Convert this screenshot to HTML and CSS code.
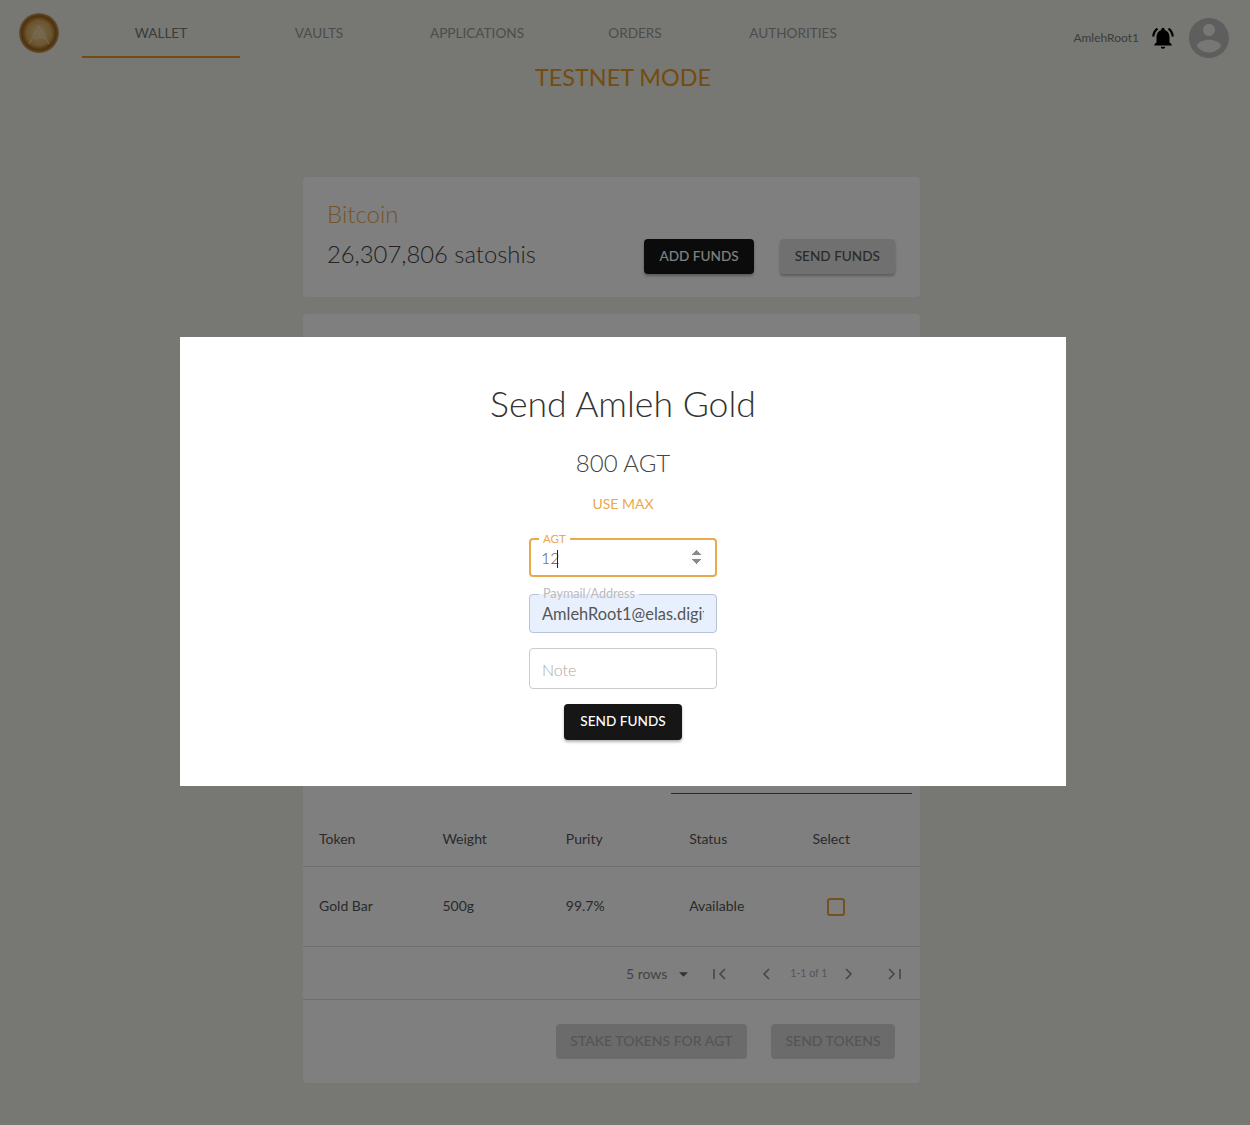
FILE: index.html
```html
<!DOCTYPE html>
<html lang="en">
<head>
    <meta charset="UTF-8">
    <meta name="viewport" content="width=device-width, initial-scale=1.0">
    <title>Send Amleh Gold</title>
    <link rel="stylesheet" href="styles.css">
</head>
<body>
    <header class="topbar">
        <svg class="logo" viewBox="0 0 40 40">
            <defs>
                <radialGradient id="coin" cx="50%" cy="50%" r="52%">
                    <stop offset="0" stop-color="#f0d7a4"/>
                    <stop offset="0.6" stop-color="#d9a95c"/>
                    <stop offset="0.82" stop-color="#9a6218"/>
                    <stop offset="1" stop-color="#d8b985"/>
                </radialGradient>
            </defs>
            <circle cx="20" cy="20" r="20" fill="url(#coin)"/>
            <path d="M10 31 20 13 30 31M15 26c4-3 8-3 11 0" fill="none" stroke="#f6e7c8" stroke-width="1.5" opacity="0.5"/>
        </svg>
        <nav class="tabs">
            <a class="tab active">WALLET</a>
            <a class="tab">VAULTS</a>
            <a class="tab">APPLICATIONS</a>
            <a class="tab">ORDERS</a>
            <a class="tab">AUTHORITIES</a>
        </nav>
        <div class="user">
            <span class="username">AmlehRoot1</span>
            <svg class="bell" viewBox="0 0 24 24"><path d="M7.58 4.08L6.15 2.65C3.75 4.48 2.17 7.3 2.03 10.5h2c.15-2.65 1.51-4.97 3.55-6.42zm12.39 6.42h2c-.15-3.2-1.73-6.02-4.12-7.85l-1.42 1.43c2.02 1.45 3.39 3.77 3.54 6.42zM18 11c0-3.07-1.64-5.64-4.5-6.32V4c0-.83-.67-1.5-1.5-1.5s-1.5.67-1.5 1.5v.68C7.63 5.36 6 7.92 6 11v5l-2 2v1h16v-1l-2-2v-5zm-6 11c.14 0 .27-.01.4-.04.65-.14 1.18-.58 1.44-1.18.1-.24.15-.5.15-.78h-4c.01 1.1.9 2 2.01 2z"/></svg>
            <svg class="avatar" viewBox="0 0 24 24"><path d="M12 2C6.48 2 2 6.48 2 12s4.48 10 10 10 10-4.48 10-10S17.52 2 12 2zm0 3c1.66 0 3 1.34 3 3s-1.34 3-3 3-3-1.34-3-3 1.34-3 3-3zm0 14.2c-2.5 0-4.71-1.28-6-3.22.03-1.99 4-3.08 6-3.08 1.99 0 5.97 1.09 6 3.08-1.29 1.94-3.5 3.22-6 3.22z"/></svg>
        </div>
    </header>

    <h2 class="testnet">TESTNET MODE</h2>

    <main class="wallet">
        <section class="card balance">
            <h3 class="card-title">Bitcoin</h3>
            <div class="balance-row">
                <span class="amount">26,307,806 satoshis</span>
                <div class="actions">
                    <button class="btn btn-dark">ADD FUNDS</button>
                    <button class="btn btn-grey">SEND FUNDS</button>
                </div>
            </div>
        </section>

        <section class="card tokens">
            <div class="search-line"></div>
            <div class="row head">
                <span>Token</span><span>Weight</span><span>Purity</span><span>Status</span><span>Select</span>
            </div>
            <div class="row body">
                <span>Gold Bar</span><span>500g</span><span>99.7%</span><span>Available</span>
                <span><i class="checkbox"></i></span>
            </div>
            <div class="pager">
                <span class="rows">5 rows</span>
                <svg class="caret" viewBox="0 0 10 5"><path d="M0 0h10L5 5z"/></svg>
                <svg class="pg pg-first" viewBox="0 0 16 16"><path d="M2 3v10M13 3 8 8l5 5"/></svg>
                <svg class="pg pg-prev" viewBox="0 0 16 16"><path d="M11 3 6 8l5 5"/></svg>
                <span class="range">1-1 of 1</span>
                <svg class="pg pg-next" viewBox="0 0 16 16"><path d="m5 3 5 5-5 5"/></svg>
                <svg class="pg pg-last" viewBox="0 0 16 16"><path d="m3 3 5 5-5 5M14 3v10"/></svg>
            </div>
            <div class="token-actions">
                <button class="btn btn-off">STAKE TOKENS FOR AGT</button>
                <button class="btn btn-off">SEND TOKENS</button>
            </div>
        </section>
    </main>

    <div class="overlay">
        <div class="modal">
            <h2 class="modal-title">Send Amleh Gold</h2>
            <p class="modal-balance">800 AGT</p>
            <a class="use-max">USE MAX</a>
            <fieldset class="field field-active">
                <legend>AGT</legend>
                <input type="number" value="12" autofocus>
                <i class="text-cursor"></i>
            </fieldset>
            <fieldset class="field field-filled">
                <legend>Paymail/Address</legend>
                <input type="text" value="AmlehRoot1@elas.digital">
            </fieldset>
            <div class="field field-plain">
                <input type="text" placeholder="Note">
            </div>
            <button class="btn btn-dark btn-send">SEND FUNDS</button>
        </div>
    </div>
</body>
</html>
```

FILE: styles.css
```css
* {
    box-sizing: border-box;
}
html, body {
    height: 100%;
}
body {
    margin: 0;
    height: 1125px;
    overflow: hidden;
    background: #eef0e6;
    font-family: Lato, "Open Sans", sans-serif;
    color: #333;
}
.topbar {
    display: flex;
    align-items: center;
    height: 58px;
    padding: 0 21px 0 19px;
}
.logo {
    width: 40px;
    height: 40px;
    margin-top: 8px;
}
.tabs {
    display: flex;
    margin-left: 23px;
}
.tab {
    width: 158px;
    height: 58px;
    padding-top: 25px;
    text-align: center;
    font-size: 13.6px;
    color: #999;
    border-bottom: 2px solid transparent;
}
.tab.active {
    color: #777;
    border-bottom-color: #e8991f;
}
.user {
    display: flex;
    align-items: center;
    margin-left: auto;
    margin-top: 20px;
}
.username {
    font-size: 12px;
    color: #777;
    margin-top: -3px;
}
.bell {
    width: 26px;
    height: 26px;
    margin-left: 11px;
    margin-top: -2px;
}
.avatar {
    width: 48px;
    height: 48px;
    margin-left: 9px;
    margin-right: -4px;
    margin-top: -2px;
    fill: #bdbdbd;
}
.testnet {
    margin: 5px 4px 0 0;
    text-align: center;
    font-size: 23.4px;
    font-weight: 400;
    line-height: 28px;
    color: #e8991f;
}
.wallet {
    width: 617px;
    margin: 86px 0 0 303px;
}
.card {
    background: #fff;
    border-radius: 4px;
    margin-bottom: 17px;
}
.balance {
    height: 120px;
    padding: 22px 25px 0 24px;
}
.card-title {
    margin: 0;
    font-size: 24px;
    font-weight: 300;
    line-height: 30px;
    color: #eaa94a;
}
.balance-row {
    display: flex;
    align-items: center;
    justify-content: space-between;
    margin-top: 10px;
}
.amount {
    margin-top: -5px;
    font-size: 23.8px;
    font-weight: 300;
    color: #444;
}
.actions {
    display: flex;
    gap: 26px;
}
.btn {
    height: 35px;
    padding: 0 15px 2px;
    border: 0;
    border-radius: 4px;
    font-family: inherit;
    font-size: 13.6px;
    font-weight: 500;
    box-shadow: 0 2px 3px rgba(0, 0, 0, 0.3);
}
.btn-dark {
    background: #161616;
    color: #fff;
}
.btn-grey {
    background: #e0e0e0;
    color: #555;
}
.btn-off {
    padding: 0 14.5px 2px;
    background: #d6d6d6;
    color: #aaa;
    font-size: 14px;
    box-shadow: none;
}
.tokens {
    height: 769px;
    padding-top: 479px;
}
.search-line {
    width: 241px;
    height: 1px;
    margin-left: 368px;
    background: #555;
}
.row {
    display: grid;
    grid-template-columns: repeat(5, 123.4px);
    align-items: center;
    padding-left: 16px;
    font-size: 14px;
    color: #555;
    border-bottom: 1px solid #ddd;
}
.row.head {
    height: 73px;
    padding-top: 16px;
}
.row.body {
    height: 80px;
    padding-bottom: 3px;
}
.checkbox {
    display: block;
    width: 18px;
    height: 18px;
    margin: 4px 0 0 14px;
    border: 2px solid #e8a33d;
    border-radius: 3px;
}
.pager {
    display: flex;
    align-items: center;
    height: 53px;
    padding-left: 323px;
    border-bottom: 1px solid #ddd;
    color: #888;
}
.rows {
    font-size: 14px;
}
.caret {
    width: 9px;
    height: 5px;
    margin: 2px 0 0 12px;
    fill: #666;
}
.pg {
    width: 16px;
    height: 16px;
    margin-top: 2px;
    fill: none;
    stroke: #888;
    stroke-width: 1.5;
}
.pg-first {
    margin-left: 24px;
}
.pg-prev {
    margin-left: 30px;
}
.range {
    width: 36px;
    margin-left: 16px;
    font-size: 10.5px;
    color: #aaa;
    white-space: nowrap;
}
.pg-next {
    margin-left: 15px;
}
.pg-last {
    margin-left: 29px;
}
.token-actions {
    display: flex;
    justify-content: flex-end;
    gap: 24px;
    padding: 24px 25px 0;
}
.overlay {
    position: fixed;
    top: 0;
    left: 0;
    width: 1250px;
    height: 1125px;
    padding: 0 4px 2px 0;
    display: flex;
    align-items: center;
    justify-content: center;
    background: rgba(0, 0, 0, 0.5);
}
.modal {
    display: flex;
    flex-direction: column;
    align-items: center;
    width: 886px;
    height: 449px;
    background: #fff;
}
.modal-title {
    margin: 46px 0 0;
    font-size: 35.6px;
    font-weight: 300;
    line-height: 42px;
    color: #333;
}
.modal-balance {
    margin: 23px 0 0;
    font-size: 24px;
    font-weight: 300;
    line-height: 30px;
    color: #444;
}
.use-max {
    margin-top: 17px;
    font-size: 14px;
    line-height: 18px;
    color: #eaa94a;
}
.field {
    position: relative;
    width: 188px;
    margin: 0;
    padding: 0 12px;
    border: 1px solid #ccc;
    border-radius: 4px;
}
.field legend {
    padding: 0 4px;
    margin-left: -3px;
    font-size: 11.5px;
    line-height: 12px;
    color: #bbb;
}
.field input {
    display: block;
    width: 100%;
    height: 32px;
    padding: 0;
    border: 0;
    outline: 0;
    background: transparent;
    font-family: inherit;
    font-size: 16px;
    font-weight: 300;
    color: #555;
}
.field-active {
    margin-top: 20px;
    height: 44px;
    border: 2px solid #eaa94a;
    padding: 0 11px 0 10px;
}
.field-active legend {
    margin-left: -2px;
    color: #eaa94a;
}
.field-active input {
    margin-top: -4px;
}
.text-cursor {
    position: absolute;
    left: 26px;
    top: 5px;
    width: 1px;
    height: 18px;
    background: #222;
}
.field-filled {
    margin-top: 11px;
    height: 45px;
    background: #e8f0fe;
    border-color: #b8c4d6;
}
.field-filled legend {
    font-size: 12.6px;
}
.field-filled input {
    margin-top: -3px;
    font-size: 16.4px;
    font-weight: 400;
}
.field-plain {
    margin-top: 15px;
    height: 41px;
    padding-top: 4px;
}
.field-plain input::placeholder {
    color: #aaa;
}
.btn-send {
    height: 36px;
    margin-top: 15px;
    padding: 0 16px 2px;
}
```
